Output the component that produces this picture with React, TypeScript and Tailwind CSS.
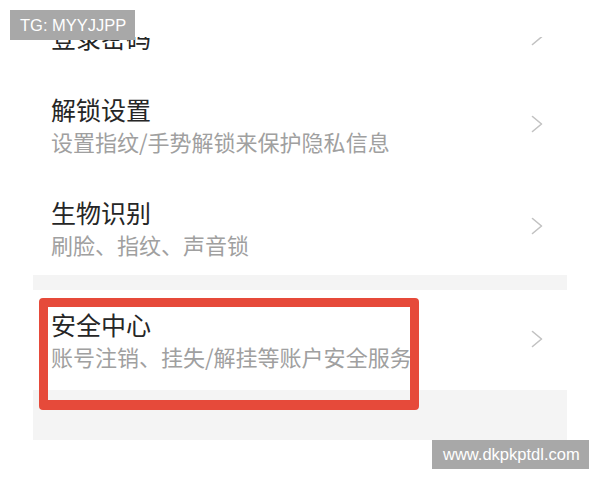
function Chevron() {
  return (
    <svg width="12" height="18" viewBox="0 0 12 18" fill="none" className="shrink-0">
      <polyline points="1.5,1.5 10.5,9 1.5,16.5" stroke="#c2c2c2" strokeWidth="1.6" strokeLinecap="round" strokeLinejoin="round" />
    </svg>
  );
}

type Item = { title: string; desc?: string };

function Row({ item, className, chevronTop }: { item: Item; className: string; chevronTop: string }) {
  return (
    <div className={`flex items-start justify-between bg-white pl-[18px] pr-[24px] ${className}`}>
      <div className="flex flex-col">
        <div className="text-[25px] leading-[30px] text-[#262626]">{item.title}</div>
        {item.desc && <div className="text-[22px] leading-[34px] text-[#a0a0a0]">{item.desc}</div>}
      </div>
      <div className={chevronTop}>
        <Chevron />
      </div>
    </div>
  );
}

export default function App() {
  return (
    <div className="relative w-[600px] h-[480px] overflow-hidden bg-white font-['Noto_Sans_CJK_SC','Noto_Sans',sans-serif]">
      <div className="pt-[37px]">
        <div className="mx-[33px] h-[403px] overflow-hidden bg-[#f4f4f4]">
          <div className="-mt-[32px] flex h-[64px] items-center justify-between bg-white pl-[18px] pr-[24px]">
            <div className="text-[25px] leading-[30px] text-[#262626]">登录密码</div>
            <Chevron />
          </div>
          <Row item={{ title: '解锁设置', desc: '设置指纹/手势解锁来保护隐私信息' }} className="h-[103px] pt-[25px]" chevronTop="mt-[21px]" />
          <Row item={{ title: '生物识别', desc: '刷脸、指纹、声音锁' }} className="h-[103px] pt-[25px]" chevronTop="mt-[20px]" />
          <div className="h-[15px]" />
          <Row item={{ title: '安全中心', desc: '账号注销、挂失/解挂等账户安全服务' }} className="h-[100px] pt-[19px]" chevronTop="mt-[21px]" />
        </div>
      </div>

      <div className="absolute left-[39px] top-[298px] h-[112px] w-[380px] rounded-[4px] border-[9px] border-b-[10px] border-[#e64a3a]" />

      <div className="absolute left-[10px] top-[10px] flex h-[30px] w-[125px] items-center bg-[#a8a8a8] pl-[10px] font-['Liberation_Sans',sans-serif] text-[16.5px] text-white">
        TG: MYYJJPP
      </div>
      <div className="absolute left-[432px] top-[440px] flex h-[29px] w-[157px] items-center bg-[#a8a8a8] pl-[11px] font-['Liberation_Sans',sans-serif] text-[16.5px] text-white">
        www.dkpkptdl.com
      </div>
    </div>
  );
}
